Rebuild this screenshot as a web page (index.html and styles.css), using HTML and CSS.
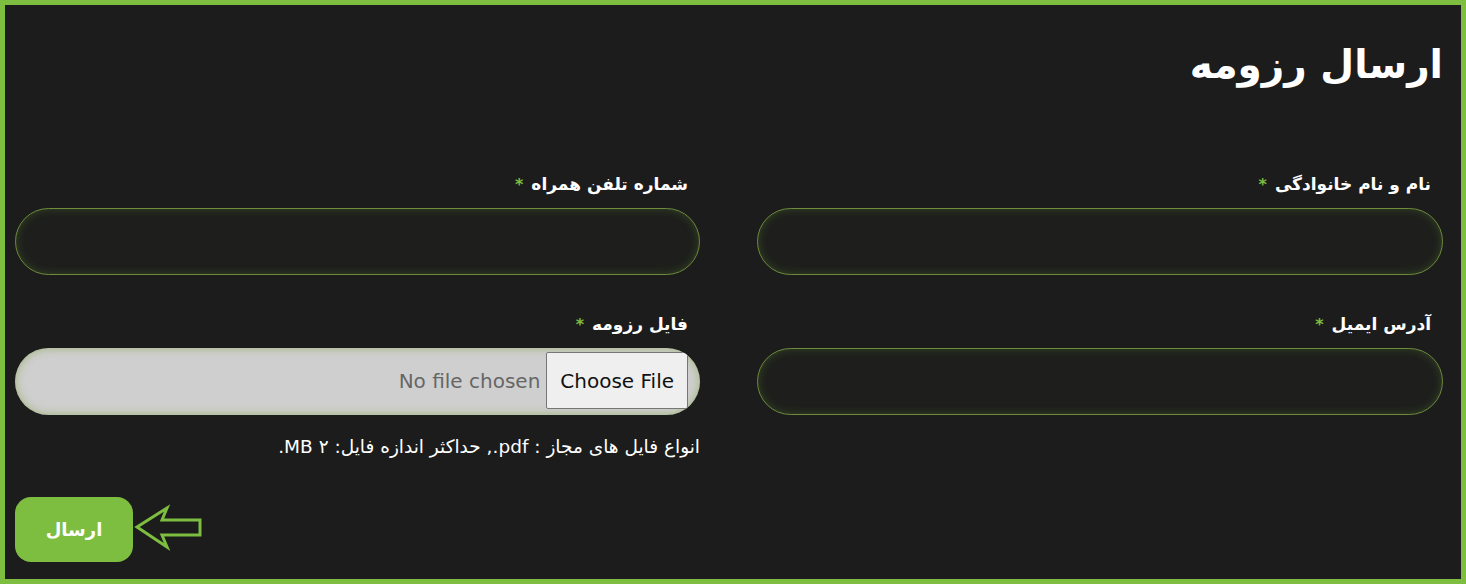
FILE: index.html
```html
<!DOCTYPE html>
<html lang="fa" dir="rtl">
<head>
<meta charset="utf-8">
<title>ارسال رزومه</title>
<link rel="stylesheet" href="styles.css">
</head>
<body>
<div class="frame">
  <h1 class="title">ارسال رزومه</h1>
  <form class="form">
    <div class="grid">
      <div class="field">
        <label class="label">نام و نام خانوادگی <span class="req">*</span></label>
        <input class="input" type="text">
      </div>
      <div class="field">
        <label class="label">شماره تلفن همراه <span class="req">*</span></label>
        <input class="input" type="text">
      </div>
      <div class="field">
        <label class="label">آدرس ایمیل <span class="req">*</span></label>
        <input class="input" type="text">
      </div>
      <div class="field">
        <label class="label">فایل رزومه <span class="req">*</span></label>
        <input class="file" type="file">
        <p class="hint">انواع فایل های مجاز : pdf., حداکثر اندازه فایل: ۲ MB.</p>
      </div>
    </div>
    <div class="actions">
      <button class="submit" type="button">ارسال</button>
      <svg class="arrow" width="70" height="48" viewBox="0 0 70 48">
        <path d="M3 23 L33 4 L28 16 L66 16 L66 31 L28 31 L33 43 Z" fill="none" stroke="#7dbd3f" stroke-width="3" stroke-linejoin="miter"/>
      </svg>
    </div>
  </form>
</div>
</body>
</html>
```
FILE: styles.css
```css
html, body {
  margin: 0;
  padding: 0;
  background: #1c1c1c;
}
body {
  font-family: "DejaVu Sans", "Noto Sans", sans-serif;
  color: #fff;
}
.frame {
  box-sizing: border-box;
  width: 1466px;
  height: 584px;
  border: 5px solid #7dbd3f;
  background: #1c1c1c;
  padding: 0 18px 0 10px;
}
.title {
  margin: 0;
  padding-top: 32px;
  font-size: 39px;
  font-weight: bold;
  line-height: 56px;
  height: 167px;
  box-sizing: border-box;
}
.grid {
  display: grid;
  grid-template-columns: 686px 685px;
  column-gap: 57px;
  row-gap: 37px;
}
.field {
  display: flex;
  flex-direction: column;
}
.label {
  font-size: 17px;
  font-weight: bold;
  line-height: 24px;
  margin-right: 12px;
  margin-bottom: 11px;
}
.req {
  color: #7dbd3f;
  font-size: 16px;
  margin-right: 2px;
}
.input {
  box-sizing: border-box;
  height: 67px;
  border: 1px solid #6e8c3c;
  border-radius: 34px;
  background: #1e1f1c;
  box-shadow: inset 0 0 8px rgba(125, 189, 63, 0.25);
  outline: none;
}
.file {
  box-sizing: border-box;
  height: 67px;
  border-radius: 34px;
  background: #cfcfcf;
  box-shadow: inset 0 0 10px rgba(125, 160, 60, 0.6);
  padding: 4px 12px;
  font-family: "DejaVu Sans", sans-serif;
  font-size: 20px;
  color: #666;
}
.file::file-selector-button {
  height: 57px;
  padding: 0 13px;
  font-family: "DejaVu Sans", sans-serif;
  font-size: 20px;
  color: #111;
  background: #efefef;
  border: 1px solid #767676;
  border-radius: 2px;
  margin-left: 6px;
}
.hint {
  margin: 20px 0 0;
  font-size: 18.5px;
  line-height: 24px;
}
.actions {
  display: flex;
  align-items: center;
  direction: ltr;
  margin-top: 38px;
  gap: 1px;
}
.submit {
  width: 118px;
  height: 65px;
  border: none;
  border-radius: 16px;
  background: #7dbd3f;
  color: #fff;
  font-family: "DejaVu Sans", sans-serif;
  font-size: 18px;
  font-weight: bold;
}
.arrow {
  margin-top: -4px;
}
```
